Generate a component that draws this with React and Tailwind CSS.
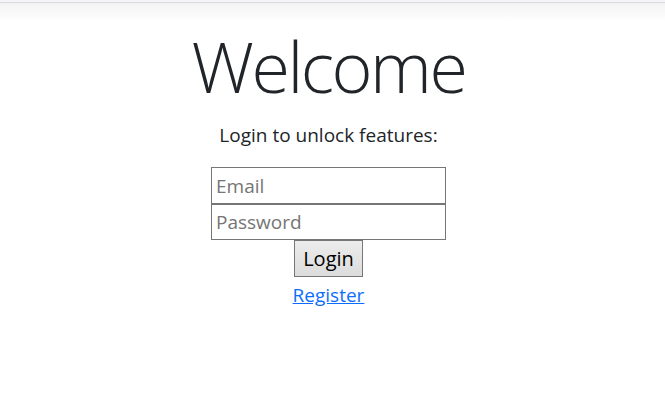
import React from "react";

export default function App() {
  return (
    <div className="min-h-screen bg-white text-[#212529]" style={{ fontFamily: '"Open Sans", "Noto Sans", sans-serif' }}>
      <div className="h-[3px] bg-[#f4f4f4] border-b border-[#dcd8e6]" />
      <div className="h-[18px] bg-gradient-to-b from-[#f3f3f3] to-white" />
      <div className="pr-2 flex flex-col items-center">
        <h1 className="text-[70px] leading-[86px] font-light tracking-[-2.5px] mt-[2px]">Welcome</h1>
        <p className="text-[19px] leading-[28px] mt-[12px]">Login to unlock features:</p>
        <form className="flex flex-col items-center mt-[18px]" onSubmit={e => e.preventDefault()}>
          <input
            type="email"
            placeholder="Email"
            className="w-[235px] h-[37px] border border-[#767676] px-[4px] text-[19px] placeholder-[#757575] outline-none"
          />
          <input
            type="password"
            placeholder="Password"
            className="w-[235px] h-[36px] border border-[#767676] px-[4px] text-[19px] placeholder-[#757575] outline-none"
          />
          <button
            type="submit"
            className="h-[37px] px-[8px] border border-[#767676] bg-gradient-to-b from-[#ececec] to-[#dcdcdc] text-[20px] text-black leading-none"
          >
            Login
          </button>
        </form>
        <a href="#" className="mt-[7px] text-[19px] leading-[22px] text-[#0d6efd] underline">Register</a>
      </div>
    </div>
  );
}
